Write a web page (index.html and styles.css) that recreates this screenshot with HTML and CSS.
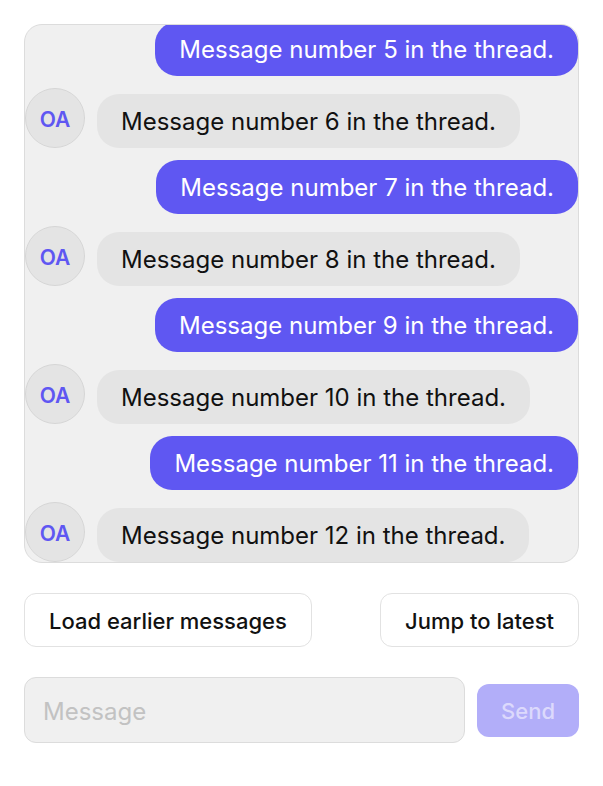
FILE: index.html
```html
<!DOCTYPE html>
<html lang="en">
<head>
<meta charset="utf-8">
<title>Thread</title>
<link rel="stylesheet" href="styles.css">
</head>
<body>
<div class="page">
  <div class="thread">
    <div class="row out"><div class="bubble bubble-out">Message number 5 in the thread.</div></div>
    <div class="row in"><div class="avatar">OA</div><div class="bubble bubble-in">Message number 6 in the thread.</div></div>
    <div class="row out"><div class="bubble bubble-out">Message number 7 in the thread.</div></div>
    <div class="row in"><div class="avatar">OA</div><div class="bubble bubble-in">Message number 8 in the thread.</div></div>
    <div class="row out"><div class="bubble bubble-out">Message number 9 in the thread.</div></div>
    <div class="row in"><div class="avatar">OA</div><div class="bubble bubble-in">Message number 10 in the thread.</div></div>
    <div class="row out"><div class="bubble bubble-out">Message number 11 in the thread.</div></div>
    <div class="row in"><div class="avatar">OA</div><div class="bubble bubble-in">Message number 12 in the thread.</div></div>
  </div>
  <div class="actions">
    <button class="btn">Load earlier messages</button>
    <button class="btn">Jump to latest</button>
  </div>
  <div class="composer">
    <div class="input">Message</div>
    <button class="send">Send</button>
  </div>
</div>
</body>
</html>
```
FILE: styles.css
```css
* { box-sizing: border-box; }
html, body { margin: 0; padding: 0; background: #ffffff; }
body {
  font-family: Inter, "Noto Sans", "Liberation Sans", sans-serif;
  color: #111111;
}
.page {
  padding: 24px;
  display: flex;
  flex-direction: column;
}
.thread {
  height: 539px;
  border: 1px solid #dcdcdc;
  border-radius: 18px;
  background: #f0f0f0;
  overflow: hidden;
  display: flex;
  flex-direction: column;
  justify-content: flex-end;
  gap: 12px;
}
.row { display: flex; flex-shrink: 0; }
.row.out { justify-content: flex-end; }
.row.in { align-items: flex-end; gap: 12px; }
.avatar {
  width: 60px;
  height: 60px;
  border-radius: 50%;
  background: #e4e4e4;
  border: 1px solid #d6d6d6;
  color: #5f57f2;
  font-weight: 600;
  font-size: 21px;
  padding-top: 2px;
  display: flex;
  align-items: center;
  justify-content: center;
  flex-shrink: 0;
}
.bubble {
  font-size: 24px;
  line-height: 30px;
  padding: 13px 24px 11px;
  border-radius: 22px;
  white-space: nowrap;
}
.bubble-out { background: #5f57f2; color: #ffffff; }
.bubble-in { background: #e4e4e4; color: #111111; }
.actions {
  margin-top: 30px;
  display: flex;
  justify-content: space-between;
}
.btn {
  font-family: inherit;
  font-size: 22px;
  font-weight: 500;
  color: #111111;
  background: #ffffff;
  border: 1px solid #e2e2e2;
  border-radius: 12px;
  height: 54px;
  padding: 2px 24px 0;
}
.composer {
  margin-top: 30px;
  display: flex;
  align-items: center;
  gap: 12px;
}
.input {
  flex: 1;
  height: 66px;
  background: #f0f0f0;
  border: 1px solid #dcdcdc;
  border-radius: 12px;
  padding: 2px 18px 0;
  display: flex;
  align-items: center;
  font-size: 24px;
  color: #c2c2c2;
}
.send {
  font-family: inherit;
  width: 102px;
  height: 53px;
  border: none;
  border-radius: 12px;
  background: #b2aef9;
  color: #dcd9fc;
  font-size: 22px;
  font-weight: 500;
  padding: 2px 0 0;
}
```
